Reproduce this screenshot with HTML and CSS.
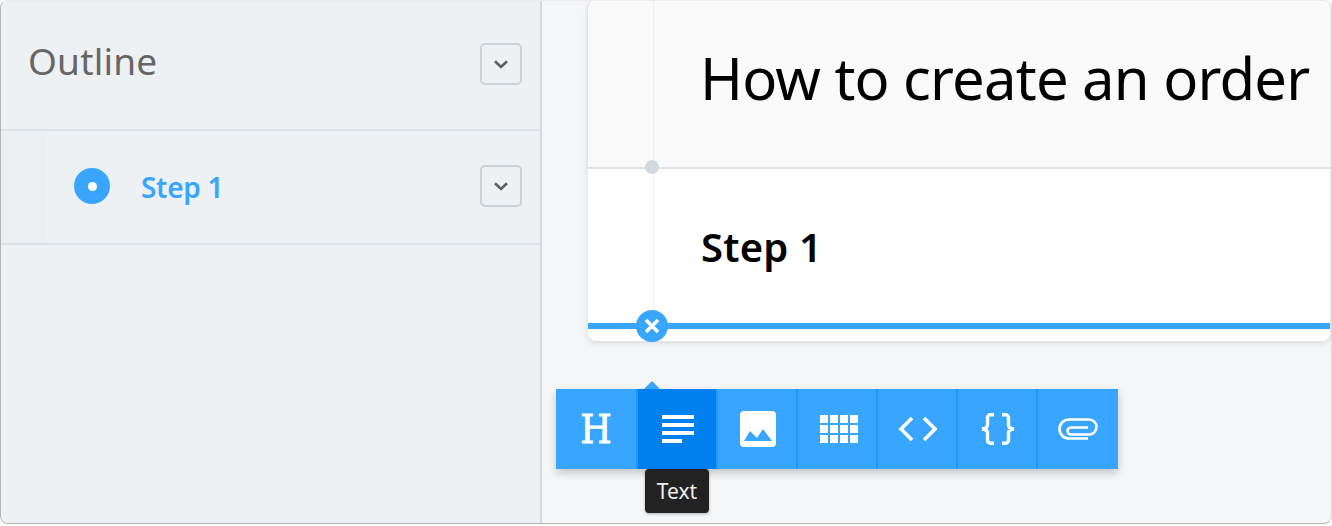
FILE: index.html
```html
<!DOCTYPE html>
<html lang="en">
<head>
<meta charset="utf-8">
<title>Outline</title>
<link rel="stylesheet" href="styles.css">
</head>
<body>
<div class="window">
  <aside class="sidebar">
    <header class="side-head">
      <h2 class="side-title">Outline</h2>
      <button class="chev-btn"><svg width="14" height="9" viewBox="0 0 14 9"><path d="M1 1.200 7 7l6-5.800" fill="none" stroke="#606060" stroke-width="2.600"/></svg></button>
    </header>
    <div class="side-row">
      <div class="row-indent"></div>
      <div class="row-main">
        <span class="radio"><span class="radio-dot"></span></span>
        <span class="row-label">Step 1</span>
        <button class="chev-btn"><svg width="14" height="9" viewBox="0 0 14 9"><path d="M1 1.200 7 7l6-5.800" fill="none" stroke="#606060" stroke-width="2.600"/></svg></button>
      </div>
    </div>
  </aside>
  <main class="main">
    <section class="card">
      <div class="card-head"><h1 class="doc-title">How to create an order</h1></div>
      <div class="guide"></div>
      <span class="node"></span>
      <div class="card-body"><h3 class="step-title">Step 1</h3></div>
      <div class="insert-line"></div>
      <span class="close"><svg width="16" height="16" viewBox="0 0 16 16"><path d="M2 2l12 12M14 2 2 14" stroke="#fff" stroke-width="3.600" fill="none"/></svg></span>
    </section>
    <div class="toolbar">
      <span class="caret"></span>
      <button class="tool"><span class="tool-h">H</span></button>
      <button class="tool tool-active">
        <svg width="32" height="28" viewBox="0 0 32 28" fill="#fff"><rect width="32" height="4"/><rect y="8" width="32" height="4"/><rect y="16" width="32" height="4"/><rect y="24" width="20" height="4"/></svg>
        <span class="tip">Text</span>
      </button>
      <button class="tool"><svg width="36" height="36" viewBox="0 0 36 36"><rect width="36" height="36" rx="4" fill="#fff"/><path d="M4 30l6-10 7 7 6-9 9 12z" fill="#38a6ff"/></svg></button>
      <button class="tool"><svg class="grid-icon" width="38" height="28" viewBox="0 0 38 28" fill="#fff"><rect width="8" height="8"/><rect x="10" width="8" height="8"/><rect x="20" width="8" height="8"/><rect x="30" width="8" height="8"/><rect y="10" width="8" height="8"/><rect x="10" y="10" width="8" height="8"/><rect x="20" y="10" width="8" height="8"/><rect x="30" y="10" width="8" height="8"/><rect y="20" width="8" height="8"/><rect x="10" y="20" width="8" height="8"/><rect x="20" y="20" width="8" height="8"/><rect x="30" y="20" width="8" height="8"/></svg></button>
      <button class="tool"><svg width="40" height="26" viewBox="0 0 40 26" fill="none" stroke="#fff" stroke-width="3.600"><path d="M14 2 3 13l11 11M26 2l11 11-11 11"/></svg></button>
      <button class="tool"><svg width="36" height="32" viewBox="0 0 36 32" fill="none" stroke="#fff" stroke-width="3.400"><path d="M14 1.700H10.500a3 3 0 0 0-3 3V12c0 2.200-2 3.700-5.500 4 3.500.3 5.500 1.800 5.500 4v7.300a3 3 0 0 0 3 3H14M22 1.700h3.500a3 3 0 0 1 3 3V12c0 2.200 2 3.700 5.500 4-3.500.3-5.500 1.800-5.500 4v7.300a3 3 0 0 1-3 3H22"/></svg></button>
      <button class="tool"><svg width="40" height="22" viewBox="0 0 40 22" fill="none" stroke="#fff" stroke-width="2.600"><path d="M30 20.500H11a9.500 9.500 0 0 1 0-19h20a7.500 7.500 0 0 1 0 15H13a3.500 3.500 0 0 1 0-7h17"/></svg></button>
    </div>
  </main>
</div>
</body>
</html>
```
FILE: styles.css
```css
* { box-sizing: border-box; }
html, body { margin: 0; height: 100%; background: #fff; }
body { font-family: "Noto Sans", "Open Sans", sans-serif; overflow: hidden; }
h1, h2, h3 { margin: 0; font-weight: 400; }
button { padding: 0; margin: 0; border: 0; background: none; font: inherit; }

.window {
  display: flex;
  width: 1332px;
  height: 524px;
  overflow: hidden;
  border-radius: 8px;
  border: 1px solid #b4b4b4;
  border-top-color: #ececec;
  border-right-color: #d8d8d8;
  background: #f5f6f8;
}

.sidebar {
  flex: 0 0 541px;
  background: #eef1f4;
  border-right: 2px solid #d3d9de;
}
.side-head {
  display: flex;
  align-items: center;
  justify-content: space-between;
  height: 130px;
  padding: 0 18px 0 27px;
  border-bottom: 2px solid #dde2e6;
}
.side-title { font-size: 37px; line-height: 1; color: #666; letter-spacing: 0.2px; padding-bottom: 9px; }
.chev-btn {
  display: flex;
  align-items: center;
  justify-content: center;
  flex: none;
  width: 42px;
  height: 42px;
  margin-bottom: 2px;
  border: 2px solid #cdd2d6;
  border-radius: 5px;
}
.side-row {
  display: flex;
  height: 114px;
  border-bottom: 2px solid #dde2e6;
}
.row-indent { flex: 0 0 45px; background: #ebeff2; }
.row-main {
  flex: 1;
  display: flex;
  align-items: center;
  gap: 31px;
  padding: 0 18px 0 28px;
}
.row-main .chev-btn { margin: 0 0 2px auto; }
.radio {
  display: flex;
  align-items: center;
  justify-content: center;
  width: 36px;
  height: 36px;
  border-radius: 50%;
  background: #38a6ff;
  margin-bottom: 2px;
}
.radio-dot { width: 9px; height: 9px; border-radius: 50%; background: #fff; }
.row-label { font-size: 28px; font-weight: 600; color: #38a6ff; letter-spacing: -0.3px; }

.main {
  flex: 1;
  display: flex;
  flex-direction: column;
  align-items: flex-start;
  padding: 0 0 0 14px;
}
.card {
  position: relative;
  width: 742px;
  height: 341px;
  margin: -1px 0 0 32px;
  background: #fff;
  border-radius: 8px;
  box-shadow: 0 2px 6px rgba(0, 0, 0, .12);
}
.guide {
  position: absolute;
  left: 65px;
  top: 0;
  bottom: 16px;
  width: 1px;
  background: #eceef0;
}
.card-head {
  height: 169px;
  padding: 40px 0 0 112px;
  background: #fafafa;
  border-bottom: 2px solid #e0e2e4;
  box-shadow: -1px 0 0 #e0e2e4;
  border-radius: 8px 8px 0 0;
}
.doc-title { position: relative; z-index: 1; font-size: 58px; line-height: 76px; color: #000; letter-spacing: -0.8px; white-space: nowrap; }
.node {
  position: absolute;
  left: 57px;
  top: 160px;
  width: 14px;
  height: 14px;
  border-radius: 50%;
  background: #d0d8e0;
}
.card-body { height: 154px; padding: 50px 0 0 113px; }
.step-title { position: relative; z-index: 1; font-size: 40px; line-height: 56px; font-weight: 600; color: #000; letter-spacing: 0.2px; }
.insert-line { height: 6px; background: #38a6ff; }
.close {
  position: absolute;
  left: 48px;
  top: 310px;
  width: 32px;
  height: 32px;
  display: flex;
  align-items: center;
  justify-content: center;
  border-radius: 50%;
  background: #38a6ff;
}

.toolbar {
  position: relative;
  display: flex;
  margin-top: 48px;
  background: #38a6ff;
  box-shadow: 0 4px 8px rgba(0, 0, 0, .2);
}
.caret {
  position: absolute;
  left: 88px;
  top: -8px;
  border: 8px solid transparent;
  border-top: 0;
  border-bottom-color: #38a6ff;
}
.tool {
  position: relative;
  display: flex;
  align-items: center;
  justify-content: center;
  width: 80px;
  height: 80px;
  padding-left: 2px;
  border-left: 2px solid #1a9aff;
  background: #38a6ff;
}
.tool:first-of-type { border-left: 0; padding-left: 0; }
.tool:last-of-type { width: 82px; padding-left: 0; }
.tool-active { background: #0080ee; }
.grid-icon { margin-left: 2px; }
.tool-h { font-family: "DejaVu Serif Condensed", "DejaVu Serif", serif; font-size: 40px; line-height: 1; color: #fff; -webkit-text-stroke: 0.8px #fff; }
.tip {
  position: absolute;
  left: 7px;
  top: 80px;
  width: 64px;
  height: 44px;
  line-height: 44px;
  text-align: center;
  font-size: 21px;
  color: #eee;
  background: #222;
  border-radius: 4px;
  box-shadow: 0 1px 3px rgba(0, 0, 0, .3);
}
```
